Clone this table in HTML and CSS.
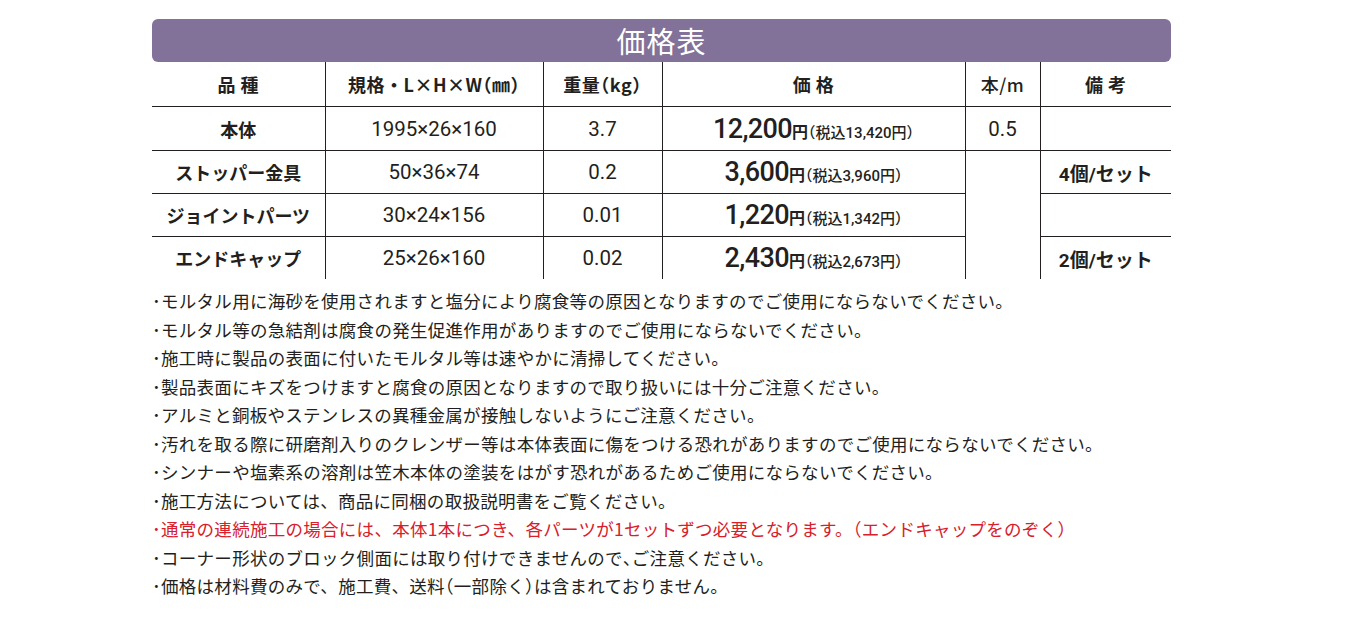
FILE: index.html
```html
<!DOCTYPE html>
<html lang="ja">
<head>
<meta charset="utf-8">
<link rel="stylesheet" href="styles.css">
</head>
<body>
<div class="wrap">
  <div class="title">価格表</div>
  <table class="price-table">
    <colgroup>
      <col class="c1"><col class="c2"><col class="c3"><col class="c4"><col class="c5"><col class="c6">
    </colgroup>
    <thead>
      <tr class="hrow">
        <th>品 種</th>
        <th>規格・L×H×W<span class="h">（</span>㎜<span class="h">）</span></th>
        <th>重量<span class="h">（</span>kg<span class="h">）</span></th>
        <th>価 格</th>
        <th class="light">本/m</th>
        <th>備 考</th>
      </tr>
    </thead>
    <tbody>
      <tr class="r1">
        <td class="name">本体</td>
        <td class="num">1995×26×160</td>
        <td class="num">3.7</td>
        <td class="price"><span class="big">12,200</span><span class="yen">円</span><span class="small"><span class="h">（</span>税込13,420円<span class="h">）</span></span></td>
        <td class="num">0.5</td>
        <td></td>
      </tr>
      <tr class="r">
        <td class="name">ストッパー金具</td>
        <td class="num">50×36×74</td>
        <td class="num">0.2</td>
        <td class="price"><span class="big">3,600</span><span class="yen">円</span><span class="small"><span class="h">（</span>税込3,960円<span class="h">）</span></span></td>
        <td class="merged" rowspan="3"></td>
        <td class="note">4個/セット</td>
      </tr>
      <tr class="r">
        <td class="name">ジョイントパーツ</td>
        <td class="num">30×24×156</td>
        <td class="num">0.01</td>
        <td class="price"><span class="big">1,220</span><span class="yen">円</span><span class="small"><span class="h">（</span>税込1,342円<span class="h">）</span></span></td>
        <td></td>
      </tr>
      <tr class="r last">
        <td class="name">エンドキャップ</td>
        <td class="num">25×26×160</td>
        <td class="num">0.02</td>
        <td class="price"><span class="big">2,430</span><span class="yen">円</span><span class="small"><span class="h">（</span>税込2,673円<span class="h">）</span></span></td>
        <td class="note">2個/セット</td>
      </tr>
    </tbody>
  </table>
  <ul class="notes">
    <li>･モルタル用に海砂を使用されますと塩分により腐食等の原因となりますのでご使用にならないでください。</li>
    <li>･モルタル等の急結剤は腐食の発生促進作用がありますのでご使用にならないでください。</li>
    <li>･施工時に製品の表面に付いたモルタル等は速やかに清掃してください。</li>
    <li>･製品表面にキズをつけますと腐食の原因となりますので取り扱いには十分ご注意ください。</li>
    <li>･アルミと銅板やステンレスの異種金属が接触しないようにご注意ください。</li>
    <li>･汚れを取る際に研磨剤入りのクレンザー等は本体表面に傷をつける恐れがありますのでご使用にならないでください。</li>
    <li>･シンナーや塩素系の溶剤は笠木本体の塗装をはがす恐れがあるためご使用にならないでください。</li>
    <li>･施工方法については、商品に同梱の取扱説明書をご覧ください。</li>
    <li class="red">･通常の連続施工の場合には、本体1本につき、各パーツが1セットずつ必要となります。（エンドキャップをのぞく）</li>
    <li>･コーナー形状のブロック側面には取り付けできませんので<span class="h">、</span>ご注意ください。</li>
    <li>･価格は材料費のみで、施工費、送料<span class="h">（</span>一部除く<span class="h">）</span>は含まれておりません。</li>
  </ul>
</div>
</body>
</html>
```

FILE: styles.css
```css
html, body {
  margin: 0;
  padding: 0;
  background: #ffffff;
}
body {
  font-family: "Noto Sans CJK JP", "Noto Sans", sans-serif;
  color: #231f20;
}
.wrap {
  width: 1019px;
  margin-left: 152px;
  padding-top: 19px;
}
.title {
  height: 43px;
  background: #827199;
  border-radius: 6px;
  color: #ffffff;
  font-size: 29px;
  line-height: 42px;
  text-align: center;
  letter-spacing: 1px;
}
.h {
  font-feature-settings: "halt";
}
.price-table {
  width: 1019px;
  border-collapse: collapse;
  table-layout: fixed;
}
.c1 { width: 173px; }
.c2 { width: 218px; }
.c3 { width: 119px; }
.c4 { width: 303px; }
.c5 { width: 75px; }
.c6 { width: 131px; }
.price-table th,
.price-table td {
  padding: 0;
  text-align: center;
  vertical-align: middle;
  border-left: 1px solid #231f20;
  border-bottom: 1px solid #231f20;
}
.price-table th:first-child,
.price-table td:first-child {
  border-left: none;
}
.price-table tr.last td {
  border-bottom: none;
}
.price-table td.merged {
  border-bottom: none;
}
.hrow th {
  height: 44px;
  font-size: 18px;
  font-weight: 700;
  letter-spacing: 0.5px;
}
.hrow th.light {
  font-weight: 500;
}
.r1 td {
  height: 43px;
}
.r td {
  height: 42px;
}
.name {
  font-size: 18px;
  font-weight: 700;
}
.num {
  font-family: Roboto, "Noto Sans CJK JP", sans-serif;
  font-size: 20.5px;
  font-weight: 400;
}
.note {
  font-family: Roboto, "Noto Sans CJK JP", sans-serif;
  font-size: 19px;
  font-weight: 700;
}
.price {
  white-space: nowrap;
}
.big {
  font-family: Roboto, "Noto Sans CJK JP", sans-serif;
  font-size: 27px;
  font-weight: 500;
  letter-spacing: -0.6px;
}
.yen {
  font-size: 16px;
  font-weight: 700;
}
.small {
  font-family: Roboto, "Noto Sans CJK JP", sans-serif;
  font-size: 15px;
  font-weight: 500;
}
.notes {
  list-style: none;
  margin: 8px 0 0 0;
  padding: 0;
  font-size: 17.5px;
  line-height: 28.5px;
  letter-spacing: 0.28px;
  white-space: nowrap;
}
.notes li.red {
  color: #d7202c;
}
```
